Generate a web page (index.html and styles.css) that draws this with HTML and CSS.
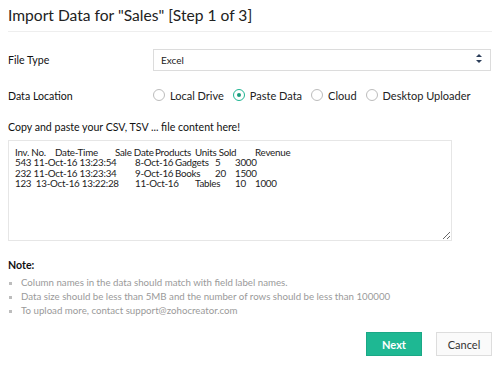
FILE: index.html
```html
<!DOCTYPE html>
<html lang="en">
<head>
  <meta charset="utf-8" />
  <title>Import Data</title>
  <link rel="stylesheet" href="styles.css">
</head>
<body>

<div class="import-dialog">
  <h1 class="dialog-title">Import Data for "Sales" [Step 1 of 3]</h1>

  <div class="field-row file-type">
    <label class="field-label" for="fileType">File Type</label>
    <div class="select-wrap">
      <select id="fileType" class="field-select">
        <option>Excel</option>
        <option>CSV</option>
        <option>TSV</option>
      </select>
      <span class="select-arrows"></span>
    </div>
  </div>

  <div class="field-row data-location">
    <span class="field-label">Data Location</span>
    <div class="radio-group">
      <label class="radio"><input type="radio" name="loc"><span class="radio-mark"></span>Local Drive</label>
      <label class="radio"><input type="radio" name="loc" checked><span class="radio-mark"></span>Paste Data</label>
      <label class="radio"><input type="radio" name="loc"><span class="radio-mark"></span>Cloud</label>
      <label class="radio"><input type="radio" name="loc"><span class="radio-mark"></span>Desktop Uploader</label>
    </div>
  </div>

  <p class="paste-label">Copy and paste your CSV, TSV ... file content here!</p>
  <textarea class="paste-box" spellcheck="false">Inv. No.	Date-Time	Sale Date	Products	Units Sold	Revenue
543 11-Oct-16 13:23:54	8-Oct-16	Gadgets	5	3000
232 11-Oct-16 13:23:34	9-Oct-16	Books	20	1500
123  13-Oct-16 13:22:28	11-Oct-16	Tables	10	1000</textarea>

  <div class="note">
    <h2>Note:</h2>
    <ul>
      <li>Column names in the data should match with field label names.</li>
      <li>Data size should be less than 5MB and the number of rows should be less than 100000</li>
      <li>To upload more, contact support@zohocreator.com</li>
    </ul>
  </div>

  <div class="actions">
    <button type="button" class="btn btn-next">Next</button>
    <button type="button" class="btn btn-cancel">Cancel</button>
  </div>
</div>

</body>
</html>
```

FILE: styles.css
```css
body {
  margin: 0;
  font-family: Lato, "Liberation Sans", sans-serif;
  background-color: #ffffff;
  color: #222;
}

.import-dialog {
  width: 484px;
  padding: 0 8px;
}

.dialog-title {
  margin: 0;
  padding: 5px 0 6px;
  font-size: 15.6px;
  line-height: 20px;
  font-weight: 400;
  color: #222;
  border-bottom: 1px solid #eeeeee;
}

.field-row {
  display: flex;
  align-items: center;
}

.file-type {
  margin-top: 16px;
}

.data-location {
  margin-top: 19px;
}

.field-label {
  width: 145px;
  font-size: 10.6px;
  color: #111;
}

.select-wrap {
  position: relative;
  flex: 1;
  margin-right: 1px;
}

.field-select {
  -webkit-appearance: none;
  appearance: none;
  width: 100%;
  height: 22px;
  padding: 0 7px;
  border: 1px solid #dcdcdc;
  border-radius: 0;
  background: #fff;
  font-family: inherit;
  font-size: 10px;
  color: #222;
}

.select-arrows {
  position: absolute;
  right: 8px;
  top: 6px;
  width: 7px;
  height: 9px;
  pointer-events: none;
}

.select-arrows::before,
.select-arrows::after {
  content: "";
  position: absolute;
  left: 0;
  border-left: 3.5px solid transparent;
  border-right: 3.5px solid transparent;
}

.select-arrows::before {
  top: 0;
  border-bottom: 3.5px solid #2c3e5a;
}

.select-arrows::after {
  bottom: 0;
  border-top: 3.5px solid #2c3e5a;
}

.radio-group {
  display: flex;
  align-items: center;
  gap: 9px;
  margin-top: -2px;
}

.radio {
  display: flex;
  align-items: center;
  font-size: 11px;
  color: #222;
}

.radio input {
  display: none;
}

.radio-mark {
  box-sizing: border-box;
  width: 12px;
  height: 12px;
  margin-right: 5px;
  border: 1px solid #bcbcbc;
  border-radius: 50%;
  display: flex;
  align-items: center;
  justify-content: center;
}

.radio input:checked + .radio-mark {
  border-color: #1fb592;
}

.radio input:checked + .radio-mark::after {
  content: "";
  width: 4px;
  height: 4px;
  border-radius: 50%;
  background-color: #1a9c7e;
}

.paste-label {
  margin: 18px 0 0;
  font-size: 10.6px;
  line-height: 14px;
  color: #111;
}

.paste-box {
  display: block;
  box-sizing: border-box;
  width: 444px;
  height: 101px;
  margin-top: 6px;
  padding: 6px 6px;
  border: 1px solid #e6e6e6;
  border-radius: 0;
  font-family: inherit;
  font-size: 9.8px;
  line-height: 10.4px;
  letter-spacing: -0.25px;
  color: #222;
  tab-size: 20px;
  -moz-tab-size: 20px;
  resize: both;
  outline: none;
}

.note {
  margin-top: 17px;
}

.note h2 {
  margin: 0;
  font-size: 10.6px;
  line-height: 14px;
  font-weight: 700;
  color: #111;
}

.note ul {
  margin: 3px 0 0;
  padding-left: 13px;
  list-style: square;
}

.note li {
  font-size: 9.7px;
  line-height: 14px;
  color: #9a9a9a;
}

.note li::marker {
  color: #bdbdbd;
  font-size: 8px;
}

.actions {
  display: flex;
  justify-content: flex-end;
  gap: 14px;
  margin-top: 15px;
}

.btn {
  width: 56px;
  height: 24px;
  font-family: inherit;
  font-size: 11px;
  cursor: pointer;
}

.btn-next {
  background-color: #1eb893;
  border: 1px solid #1aa886;
  color: #fff;
  font-weight: 700;
}

.btn-cancel {
  background-color: #fafafa;
  border: 1px solid #dddddd;
  color: #333;
}
```
